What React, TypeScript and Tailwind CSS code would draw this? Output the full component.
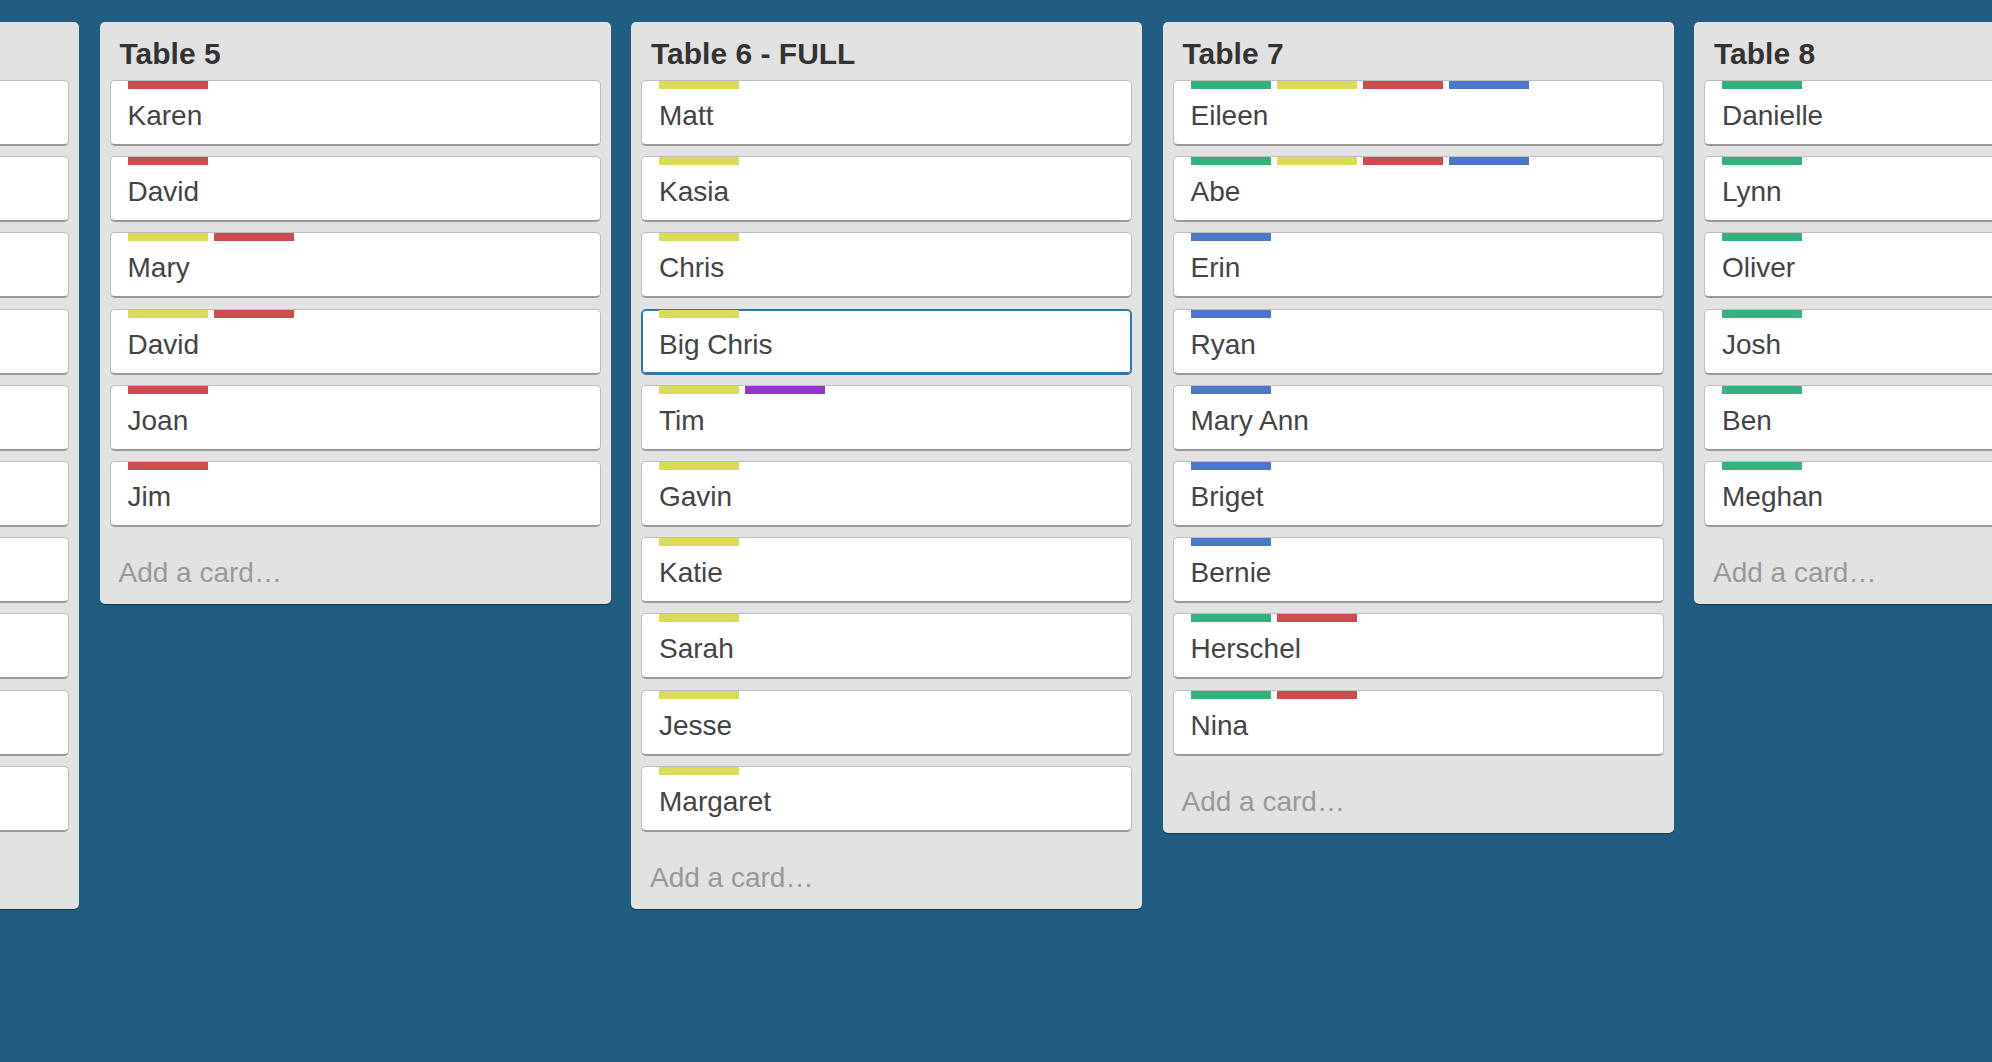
import React from 'react';

type LabelColor = 'green' | 'yellow' | 'red' | 'blue' | 'purple';

type Card = { name: string; labels: LabelColor[]; focused?: boolean };

type List = { id: string; title: string; cards: Card[]; partial?: boolean };

const labelClass: Record<LabelColor, string> = {
  green: 'bg-[#34b27d]',
  yellow: 'bg-[#dbdb57]',
  red: 'bg-[#cb4d4d]',
  blue: 'bg-[#4d77cb]',
  purple: 'bg-[#9933cc]',
};

const blank = (labels: LabelColor[]): Card => ({ name: '\u00a0', labels });

const lists: List[] = [
  {
    // only the right edge of this list is on screen
    id: 'table-4',
    title: '\u00a0',
    partial: true,
    cards: [
      blank(['yellow']), blank(['yellow']), blank(['yellow']), blank(['yellow']), blank(['yellow']),
      blank(['yellow']), blank(['yellow']), blank(['yellow']), blank(['yellow']), blank(['yellow']),
    ],
  },
  {
    id: 'table-5',
    title: 'Table 5',
    cards: [
      { name: 'Karen', labels: ['red'] },
      { name: 'David', labels: ['red'] },
      { name: 'Mary', labels: ['yellow', 'red'] },
      { name: 'David', labels: ['yellow', 'red'] },
      { name: 'Joan', labels: ['red'] },
      { name: 'Jim', labels: ['red'] },
    ],
  },
  {
    id: 'table-6',
    title: 'Table 6 - FULL',
    cards: [
      { name: 'Matt', labels: ['yellow'] },
      { name: 'Kasia', labels: ['yellow'] },
      { name: 'Chris', labels: ['yellow'] },
      { name: 'Big Chris', labels: ['yellow'], focused: true },
      { name: 'Tim', labels: ['yellow', 'purple'] },
      { name: 'Gavin', labels: ['yellow'] },
      { name: 'Katie', labels: ['yellow'] },
      { name: 'Sarah', labels: ['yellow'] },
      { name: 'Jesse', labels: ['yellow'] },
      { name: 'Margaret', labels: ['yellow'] },
    ],
  },
  {
    id: 'table-7',
    title: 'Table 7',
    cards: [
      { name: 'Eileen', labels: ['green', 'yellow', 'red', 'blue'] },
      { name: 'Abe', labels: ['green', 'yellow', 'red', 'blue'] },
      { name: 'Erin', labels: ['blue'] },
      { name: 'Ryan', labels: ['blue'] },
      { name: 'Mary Ann', labels: ['blue'] },
      { name: 'Briget', labels: ['blue'] },
      { name: 'Bernie', labels: ['blue'] },
      { name: 'Herschel', labels: ['green', 'red'] },
      { name: 'Nina', labels: ['green', 'red'] },
    ],
  },
  {
    id: 'table-8',
    title: 'Table 8',
    cards: [
      { name: 'Danielle', labels: ['green'] },
      { name: 'Lynn', labels: ['green'] },
      { name: 'Oliver', labels: ['green'] },
      { name: 'Josh', labels: ['green'] },
      { name: 'Ben', labels: ['green'] },
      { name: 'Meghan', labels: ['green'] },
    ],
  },
];

function ListCard({ card }: { card: Card }) {
  return (
    <div
      className={`mb-[10.2px] h-[66px] rounded-[5px] border border-b-2 bg-white px-[17px] pb-[10px] ${
        card.focused
          ? 'border-[#2a78ae] shadow-[inset_0_0_0_1px_#2a78ae]'
          : 'border-[#bdbdbd] border-b-[#999999]'
      }`}
    >
      {/* labels */}
      <div className="flex h-[8px] gap-[6px]">
        {card.labels.map((l, i) => (
          <span key={i} className={`block h-[8px] w-[80px] ${labelClass[l]}`} />
        ))}
      </div>
      <p className="mt-[9px] text-[28px] leading-[36px] text-[#444444] whitespace-nowrap">{card.name}</p>
    </div>
  );
}

function BoardList({ list }: { list: List }) {
  return (
    <div
      className={`w-[511px] shrink-0 rounded-[5px] bg-[#e2e2e2] px-[10px] pt-[14px] pb-[13px] shadow-[0_1px_1px_rgba(0,0,0,0.4)] ${
        list.partial ? 'ml-[-432px]' : ''
      }`}
    >
      <h2 className="mb-[8px] px-[10px] text-[30px] font-bold leading-[36px] text-[#333333] whitespace-nowrap">
        {list.title}
      </h2>
      <div>
        {list.cards.map((c, i) => (
          <ListCard key={i} card={c} />
        ))}
      </div>
      <p className="px-[9px] pt-[18px] text-[28px] leading-[36px] text-[#999999] whitespace-nowrap">
        {list.partial ? '\u00a0' : 'Add a card…'}
      </p>
    </div>
  );
}

export default function App() {
  return (
    <div className="h-screen w-full overflow-hidden bg-[#215d80] font-['Liberation_Sans',Arial,sans-serif]">
      <div className="flex items-start gap-[20.5px] pt-[22px]">
        {lists.map((l) => (
          <BoardList key={l.id} list={l} />
        ))}
      </div>
    </div>
  );
}
